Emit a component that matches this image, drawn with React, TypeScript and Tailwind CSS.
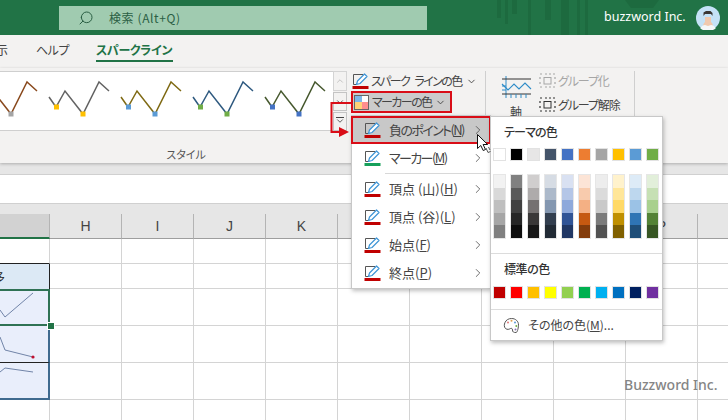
import { ChevronDown, ChevronRight, ChevronUp, Search } from "lucide-react";

const theme = ["bg-[#ffffff]", "bg-[#000000]", "bg-[#e7e6e6]", "bg-[#44546a]", "bg-[#4472c4]", "bg-[#ed7d31]", "bg-[#a5a5a5]", "bg-[#ffc000]", "bg-[#5b9bd5]", "bg-[#70ad47]"];
const tints = [
  ["bg-[#f2f2f2]", "bg-[#d9d9d9]", "bg-[#bfbfbf]", "bg-[#a6a6a6]", "bg-[#808080]"],
  ["bg-[#808080]", "bg-[#595959]", "bg-[#404040]", "bg-[#262626]", "bg-[#0d0d0d]"],
  ["bg-[#d0cece]", "bg-[#aeabab]", "bg-[#757171]", "bg-[#3a3838]", "bg-[#171717]"],
  ["bg-[#d6dce4]", "bg-[#acb9ca]", "bg-[#8497b0]", "bg-[#333f4f]", "bg-[#222b35]"],
  ["bg-[#d9e1f2]", "bg-[#b4c6e7]", "bg-[#8ea9db]", "bg-[#305496]", "bg-[#203764]"],
  ["bg-[#fce4d6]", "bg-[#f8cbad]", "bg-[#f4b084]", "bg-[#c65911]", "bg-[#833c0c]"],
  ["bg-[#ededed]", "bg-[#dbdbdb]", "bg-[#c9c9c9]", "bg-[#7b7b7b]", "bg-[#525252]"],
  ["bg-[#fff2cc]", "bg-[#ffe699]", "bg-[#ffd966]", "bg-[#bf8f00]", "bg-[#806000]"],
  ["bg-[#ddebf7]", "bg-[#bdd7ee]", "bg-[#9bc2e6]", "bg-[#2f75b5]", "bg-[#1f4e78]"],
  ["bg-[#e2efda]", "bg-[#c6e0b4]", "bg-[#a9d08e]", "bg-[#548235]", "bg-[#375623]"],
];
const standard = ["bg-[#c00000]", "bg-[#ff0000]", "bg-[#ffc000]", "bg-[#ffff00]", "bg-[#92d050]", "bg-[#00b050]", "bg-[#00b0f0]", "bg-[#0070c0]", "bg-[#002060]", "bg-[#7030a0]"];

const styles = [
  { line: "#8a4a1e", a: "none", b: "#a5a5a5" },
  { line: "#636363", a: "#ffc000", b: "#ffc000" },
  { line: "#7f6a14", a: "#5b9bd5", b: "#5b9bd5" },
  { line: "#2f5a80", a: "#70ad47", b: "#70ad47" },
  { line: "#47592f", a: "#4472c4", b: "#4472c4" },
];

function GalleryLine({ line, a, b }: { line: string; a: string; b: string }) {
  return (
    <svg width="72" height="58" viewBox="0 0 72 58" className="shrink-0">
      <polyline points="8,25 15,35 24,19 42,42 58,10 68,19" fill="none" stroke={line} strokeWidth="1.5" />
      {a !== "none" && <rect x="13" y="32.500" width="5" height="5" fill={a} />}
      <rect x="39.500" y="39.500" width="5" height="5" fill={b} />
    </svg>
  );
}

function PenIcon({ bar = "#c00000" }: { bar?: string }) {
  return (
    <svg width="17" height="17" viewBox="0 0 17 17" className="shrink-0">
      <path d="M1.5 11.5V1.5H11" fill="none" stroke="#555" strokeWidth="1" />
      <path d="M1.5 11.5H5" fill="none" stroke="#555" strokeWidth="1" />
      <path d="M4.5 11.5l1-3.5L12.5 1l2.5 2.5-7 7z" fill="#fff" stroke="#3f95d6" strokeWidth="1.2" strokeLinejoin="round" />
      <rect x="0.5" y="13" width="16" height="3" fill={bar} />
    </svg>
  );
}

function MenuRow({ label, bar, active, kana }: { label: React.ReactNode; bar?: string; active?: boolean; kana?: boolean }) {
  return (
    <div className={active ? "h-[28px] flex items-center pl-[11px] pr-[4px] bg-[#c8c8c8] border-2 border-[#d90d17] -ml-px -mr-px" : "h-[28px] flex items-center pl-[12px] pr-[5px]"}>
      <PenIcon bar={bar} />
      <span className={kana ? "ml-[8px] text-[13px] tracking-[-1.6px] text-[#444444] flex-1 whitespace-nowrap" : "ml-[8px] text-[13px] text-[#444444] flex-1 whitespace-nowrap"}>{label}</span>
      <ChevronRight size={14} strokeWidth={1.3} className="text-[#444444]" />
    </div>
  );
}

function GroupIcon({ color }: { color: string }) {
  return (
    <svg width="17" height="16" viewBox="0 0 17 16" className="shrink-0">
      <path d="M1 1h2M14 1h2M1 14h2M14 14h2M1 4v2M16 4v2M1 9v2M16 9v2M6 1h2M10 1h2M6 14h2M10 14h2" stroke={color} strokeWidth="1.2" fill="none" />
      <rect x="5" y="4.500" width="7" height="6.500" fill="none" stroke={color} strokeWidth="1" />
    </svg>
  );
}

function ColumnHeader({ label }: { label: string }) {
  return (
    <div className="w-[72px] shrink-0 flex items-center justify-center border-r border-b border-r-[#b4b4b4] border-b-[#9e9e9e] text-[14px] text-[#444444] font-['Liberation_Sans',sans-serif]">
      {label}
    </div>
  );
}

function Blank() {
  return <div className="w-[72px] shrink-0 border-r border-b border-[#d4d4d4]" />;
}

function Blanks() {
  return (
    <>
      {Array.from({ length: 10 }).map((_, i) => (
        <Blank key={i} />
      ))}
    </>
  );
}

export default function App() {
  return (
    <div className="relative w-[728px] h-[420px] overflow-hidden bg-white font-['Noto_Sans_CJK_JP','Liberation_Sans',sans-serif] [font-feature-settings:'palt']">
      {/* Title bar */}
      <div className="relative h-[35px] bg-[#217346] flex items-center overflow-hidden">
        <svg width="240" height="35" viewBox="0 0 240 35" className="absolute left-[495px] top-0">
          <g fill="#1d6a3f">
            <rect x="2" y="0" width="4" height="18" />
            <rect x="10" y="0" width="3" height="24" />
            <rect x="17" y="0" width="5" height="14" />
            <rect x="33" y="0" width="3" height="35" />
            <rect x="50" y="0" width="6" height="20" />
            <rect x="66" y="0" width="8" height="35" />
            <rect x="82" y="0" width="3" height="35" />
            <rect x="90" y="0" width="3" height="35" />
            <path d="M130 0h34l-6 8h-22z" />
          </g>
        </svg>
        <div className="relative ml-[59px] w-[368px] h-[24px] bg-[#a0cbb0] flex items-center">
          <Search size={16} strokeWidth={1.5} className="ml-[19px] -scale-x-100 text-[#2b5f44]" />
          <span className="ml-[15px] text-[12px] text-[#2b5f44] tracking-[0.6px]">検索 (Alt+Q)</span>
        </div>
        <span className="relative ml-[177px] w-[80px] text-[12.5px] text-white font-['Noto_Sans',sans-serif] whitespace-nowrap">buzzword Inc.</span>
        <svg width="24" height="24" viewBox="0 0 24 24" className="relative ml-[12px] shrink-0">
          <circle cx="12" cy="12" r="12" fill="#c4e2f6" />
          <path d="M7 21c0-3 1-4 2-5v-5h6v5c1 1 2 2 2 5a12 12 0 0 1-10 0z" fill="#f0c9ae" />
          <path d="M4 22c2-2 3-3 5-3l3 1 3-1c2 0 3 1 5 3a12 12 0 0 1-16 0z" fill="#f4f7f8" />
          <path d="M7.500 10V6.500L10 5h4.500l2 2v3l-1.500-2h-6z" fill="#3b3734" />
        </svg>
      </div>

      {/* Tabs */}
      <div className="h-[33px] bg-[#f3f2f1] flex items-start text-[12px] text-[#444444] pt-[6px]">
        <span className="w-[8px] overflow-hidden flex justify-end">示</span>
        <span className="ml-[28px] w-[32px] whitespace-nowrap tracking-[-0.5px]">ヘルプ</span>
        <div className="ml-[28px] w-[77px] h-[21px] border-b-2 border-[#217346] font-bold text-[#217346] whitespace-nowrap tracking-[-0.3px]">スパークライン</div>
      </div>

      {/* Ribbon */}
      <div className="relative h-[95px] bg-[#f3f2f1] flex shadow-[0_1px_3px_rgba(0,0,0,0.25)] pt-[3px]">
        <div className="w-[333px] shrink-0 flex flex-col">
          <div className="h-[60px] bg-white border-t border-b border-[#cfcfcf] flex overflow-hidden -ml-[31px]">
            {styles.map((s) => (
              <GalleryLine key={s.line} line={s.line} a={s.a} b={s.b} />
            ))}
          </div>
          <div className="mt-[15px] pl-[39px] text-center text-[11px] text-[#555555]">スタイル</div>
        </div>
        <div className="w-[14px] shrink-0 h-[60px] flex flex-col gap-px">
          <div className="h-[20px] border border-[#d4d4d4] flex items-center justify-center text-[#bbbbbb]">
            <ChevronUp size={10} />
          </div>
          <div className="h-[19px] border border-[#c4c4c4] flex items-center justify-center text-[#444444]">
            <ChevronDown size={10} />
          </div>
          <div className="h-[19px] border border-[#c4c4c4] flex flex-col items-center justify-center text-[#444444]">
            <div className="w-[8px] h-px bg-[#444444]" />
            <ChevronDown size={10} className="-mt-[2px]" />
          </div>
        </div>
        <div className="w-[139px] shrink-0 pl-[4px] border-r border-[#cfcfcf] h-[88px] flex flex-col">
          <div className="h-[20px] flex items-center pl-[1px]">
            <PenIcon />
            <span className="ml-[2px] text-[12px] tracking-[-1.6px] [word-spacing:4px] text-[#444444] whitespace-nowrap">スパーク ラインの色</span>
            <ChevronDown size={11} className="ml-[4px] text-[#444444]" />
          </div>
          <div className="w-[101px] h-[22px] bg-[#cbcbcb] border-2 border-[#d90d17] flex items-center pl-[1px]">
            <div className="w-[15px] h-[15px] grid grid-cols-2 grid-rows-2 border border-[#666666] shrink-0">
              <div className="bg-[#7db7e8]" />
              <div className="bg-white" />
              <div className="bg-[#ffd277]" />
              <div className="bg-[#ff8e8e]" />
            </div>
            <span className="ml-[3px] text-[12px] tracking-[-1.6px] text-[#444444] whitespace-nowrap">マーカーの色</span>
            <ChevronDown size={11} className="ml-[4px] text-[#444444]" />
          </div>
        </div>
        <div className="w-[149px] shrink-0 border-r border-[#cfcfcf] h-[88px] flex">
          <div className="ml-[14px] w-[32px] flex flex-col items-center pt-[4px]">
            <svg width="31" height="24" viewBox="0 0 31 24">
              <path d="M5 1v22" stroke="#2e8cc8" strokeWidth="1" fill="none" />
              <path d="M1 4h29M1 19h29" stroke="#333" strokeWidth="1" fill="none" />
              <path d="M1 9l6 6 6-6 5 5 6-6 6 6" stroke="#2e8cc8" strokeWidth="1.1" fill="none" />
              <path d="M1 11h4M1 15h4M10 19v4M15 19v4M20 19v4M25 19v4" stroke="#2e8cc8" strokeWidth="1" fill="none" />
            </svg>
            <span className="mt-[4px] text-[12px] text-[#444444]">軸</span>
          </div>
          <div className="ml-[7px] -mt-[2px] flex flex-col text-[12px] tracking-[-1.1px]">
            <div className="h-[24px] flex items-center text-[#a6a6a6] whitespace-nowrap">
              <GroupIcon color="#a6a6a6" />
              <span className="ml-[2px]">グループ化</span>
            </div>
            <div className="h-[24px] flex items-center text-[#444444] whitespace-nowrap">
              <GroupIcon color="#333333" />
              <span className="ml-[2px]">グループ解除</span>
            </div>
          </div>
        </div>
      </div>

      {/* Formula bar */}
      <div className="h-[51px] bg-[#e6e6e6] flex flex-col pt-[11px]">
        <div className="h-[30px] bg-white border-t border-b border-[#d0d0d0]" />
      </div>

      {/* Sheet */}
      <div className="flex h-[25px] bg-[#e6e6e6]">
        <div className="w-[50px] shrink-0 bg-[#d2d2d2] border-b-2 border-[#217346] border-r border-r-[#b4b4b4]" />
        {["H", "I", "J", "K", "L", "M", "N", "O", "P", "Q"].map((c) => (
          <ColumnHeader key={c} label={c} />
        ))}
      </div>
      <div className="flex h-[25px]">
        <div className="w-[50px] shrink-0 border-r border-r-[#d4d4d4] border-b border-b-[#222222]" />
        <Blanks />
      </div>
      <div className="flex h-[25px]">
        <div className="w-[50px] shrink-0 bg-[#dce9f5] border-r border-[#222222] flex justify-end items-center pr-[44px] overflow-hidden">
          <span className="text-[12px] text-[#222222] shrink-0">多</span>
        </div>
        <Blanks />
      </div>
      <div className="relative flex h-[37px]">
        <div className="w-[50px] shrink-0 bg-[#e9eefb] border-t-2 border-b-2 border-r-2 border-[#2f7254]">
          <svg width="48" height="33" viewBox="0 0 48 33">
            <polyline points="0,19 5,26 33,2" fill="none" stroke="#7184a8" strokeWidth="1" />
          </svg>
        </div>
        <Blanks />
        <div className="absolute left-[47px] top-[33px] w-[6px] h-[6px] bg-[#217346] border border-white box-content" />
      </div>
      <div className="flex h-[37px]">
        <div className="w-[50px] shrink-0 bg-[#e9eefb] border-r-2 border-r-[#3f6a8f] border-b border-b-[#222222]">
          <svg width="48" height="36" viewBox="0 0 48 36">
            <polyline points="0,11 5,24 33,31" fill="none" stroke="#7184a8" strokeWidth="1" />
            <circle cx="33" cy="31" r="1.6" fill="#c00f2f" />
          </svg>
        </div>
        <Blanks />
      </div>
      <div className="flex h-[37px]">
        <div className="w-[50px] shrink-0 bg-[#e9eefb] border-r-2 border-b-2 border-[#3f6a8f]">
          <svg width="48" height="35" viewBox="0 0 48 35">
            <polyline points="0,9 5,5 33,9" fill="none" stroke="#7184a8" strokeWidth="1" />
          </svg>
        </div>
        <Blanks />
      </div>
      <div className="flex h-[37px]">
        <div className="w-[50px] shrink-0 border-r border-b border-[#d4d4d4]" />
        <Blanks />
      </div>

      {/* Watermark */}
      <div className="absolute left-[624px] top-[374px] text-[14px] font-medium text-[#858585] font-['Noto_Sans',sans-serif] whitespace-nowrap">Buzzword Inc.</div>

      {/* Dropdown menu */}
      <div className="absolute left-[351px] top-[115px] w-[140px] h-[174px] bg-white border border-[#c8c8c8] shadow-[1px_2px_4px_rgba(0,0,0,0.25)] flex flex-col">
        <MenuRow active kana label={<>負のポイント(<span className="underline">N</span>)</>} />
        <MenuRow kana bar="#16a05a" label={<>マーカー(<span className="underline">M</span>)</>} />
        <div className="ml-[33px] h-px bg-[#d8d8d8] my-px" />
        <MenuRow label={<>頂点 (山)(<span className="underline">H</span>)</>} />
        <MenuRow label={<>頂点 (谷)(<span className="underline">L</span>)</>} />
        <MenuRow label={<>始点(<span className="underline">F</span>)</>} />
        <MenuRow label={<>終点(<span className="underline">P</span>)</>} />
      </div>

      {/* Colour flyout */}
      <div className="absolute left-[490px] top-[116px] w-[173px] h-[225px] bg-white border border-[#c8c8c8] shadow-[1px_2px_4px_rgba(0,0,0,0.25)] flex flex-col">
        <div className="h-[31px] pl-[13px] pt-[6px] text-[12px] font-medium tracking-[-0.8px] text-[#333333]">テーマの色</div>
        <div className="ml-[2px] flex gap-[4px]">
          {theme.map((c) => (
            <div key={c} className={"w-[13px] h-[13px] border border-[#e2e2e2] " + c} />
          ))}
        </div>
        <div className="ml-[2px] mt-[13px] flex gap-[4px]">
          {tints.map((col, i) => (
            <div key={i} className="w-[13px] h-[65px] flex flex-col border border-[#e6e6e6]">
              {col.map((c) => (
                <div key={c} className={"flex-1 " + c} />
              ))}
            </div>
          ))}
        </div>
        <div className="mt-[14px] h-px bg-[#dcdcdc]" />
        <div className="h-[25px] pl-[13px] pt-[6px] text-[12px] font-medium tracking-[-0.4px] text-[#333333] leading-[18px]">標準の色</div>
        <div className="ml-[2px] mt-[7px] flex gap-[4px]">
          {standard.map((c) => (
            <div key={c} className={"w-[13px] h-[13px] border border-[#e2e2e2] " + c} />
          ))}
        </div>
        <div className="mt-[10px] h-px bg-[#dcdcdc]" />
        <div className="flex items-center h-[30px] pl-[12px]">
          <svg width="17" height="17" viewBox="0 0 17 17" className="shrink-0">
            <path d="M8.500 1.500c4 0 7 2.600 7 6.500 0 1.500-.8 7.500-2.500 7.500-2.500 0-3.500-.5-3.500-2.500 0-1.500-1-2-2-1.500-1.500.8-3 1.500-5 0-1.500-1.500-1.500-4-.5-6 1-2.500 3.500-4 6.500-4z" fill="none" stroke="#555" strokeWidth="1" />
            <circle cx="5" cy="5.500" r="1" fill="#e07b7b" />
            <circle cx="8.500" cy="3.800" r="1" fill="#e0a050" />
            <circle cx="12" cy="5.500" r="1" fill="#5b9bd5" />
            <circle cx="13.300" cy="9" r="1" fill="#70ad47" />
            <circle cx="12.500" cy="12.500" r="1" fill="#8a6fb0" />
          </svg>
          <span className="ml-[8px] text-[12px] text-[#444444] whitespace-nowrap">その他の色(<span className="underline">M</span>)...</span>
        </div>
      </div>

      {/* Red annotation arrow */}
      <svg width="24" height="38" viewBox="0 0 24 38" className="absolute left-[329px] top-[101px]">
        <path d="M23 2H2.500V31H12" fill="none" stroke="#d90d17" strokeWidth="2" />
        <path d="M10 26l10 5-10 5z" fill="#d90d17" />
      </svg>

      {/* Mouse cursor */}
      <svg width="15" height="21" viewBox="0 0 15 21" className="absolute left-[477px] top-[134px]">
        <path d="M.5.500v14l3.300-3 2.400 5 2.300-1-2.400-5h4.500z" fill="#fff" stroke="#111" strokeWidth="1" strokeLinejoin="round" />
        <path d="M9 14l2 4.500 2.500-1M11.500 13l1.500 3" fill="none" stroke="#555" strokeWidth="1" />
      </svg>
    </div>
  );
}
